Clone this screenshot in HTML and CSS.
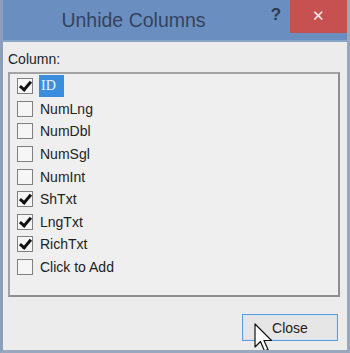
FILE: index.html
```html
<!DOCTYPE html>
<html lang="en">
<head>
    <meta charset="UTF-8">
    <title>Unhide Columns</title>
    <link rel="stylesheet" href="styles.css">
</head>
<body>
    <div class="window">
        <div class="titlebar">
            <div class="title">Unhide Columns</div>
            <div class="help">?</div>
            <div class="close-x">&#x2715;</div>
        </div>

        <div class="content">
            <div class="label">Column:</div>
            <div class="listbox">
                <div class="item"><span class="box checked"></span><span class="name selected">ID</span></div>
                <div class="item"><span class="box"></span><span class="name">NumLng</span></div>
                <div class="item"><span class="box"></span><span class="name">NumDbl</span></div>
                <div class="item"><span class="box"></span><span class="name">NumSgl</span></div>
                <div class="item"><span class="box"></span><span class="name">NumInt</span></div>
                <div class="item"><span class="box checked"></span><span class="name">ShTxt</span></div>
                <div class="item"><span class="box checked"></span><span class="name">LngTxt</span></div>
                <div class="item"><span class="box checked"></span><span class="name">RichTxt</span></div>
                <div class="item"><span class="box"></span><span class="name">Click to Add</span></div>
            </div>
            <div class="footer">
                <button class="btn">Close</button>
            </div>
        </div>

        <svg class="cursor" width="24" height="32" viewBox="0 0 24 32">
            <path d="M1 1 L1 24 L6.5 18.5 L10.5 28 L14 26.5 L10 17.5 L17.5 17.5 Z" fill="#fff" stroke="#111" stroke-width="1.2" stroke-linejoin="round"/>
        </svg>
    </div>
</body>
</html>
```

FILE: styles.css
```css
body {
    margin: 0;
    padding: 0;
    font-family: "Liberation Sans", Arial, sans-serif;
    background-color: #ececec;
}

.window {
    position: relative;
    width: 350px;
    height: 353px;
    box-sizing: border-box;
    border-left: 3px solid #8b9fbd;
    border-right: 3px solid #9aa8bd;
    border-bottom: 3px solid #9aa8bd;
    background-color: #ececec;
    display: flex;
    flex-direction: column;
    overflow: hidden;
}

.titlebar {
    height: 40px;
    background-color: #6a8ec0;
    border-bottom: 2px solid #8aa4c8;
    display: flex;
    align-items: flex-start;
    flex-shrink: 0;
}

.title {
    flex: 1;
    text-align: center;
    font-size: 19.5px;
    color: #33445c;
    line-height: 40px;
    padding-left: 2px;
}

.help {
    width: 28px;
    text-align: center;
    font-size: 17px;
    font-weight: bold;
    color: #2c3a50;
    line-height: 30px;
}

.close-x {
    width: 57px;
    height: 33px;
    background-color: #c75050;
    color: #fbe9e9;
    font-size: 15px;
    line-height: 31px;
    text-align: center;
}

.content {
    flex: 1;
    display: flex;
    flex-direction: column;
    padding: 0 7px 0 5px;
}

.label {
    font-size: 14px;
    color: #1e1e1e;
    margin-top: 9px;
    height: 21px;
}

.listbox {
    height: 220px;
    border: 2px solid #a3a3a3;
    border-right-color: #8f8f8f;
    border-bottom-color: #8f8f8f;
    background-color: #efefef;
    padding-top: 1px;
}

.item {
    display: flex;
    align-items: center;
    height: 22.6px;
}

.box {
    width: 14px;
    height: 14px;
    border: 1px solid #808080;
    background-color: #f6f6f6;
    margin-left: 7px;
    margin-right: 6px;
    position: relative;
}

.box.checked::after {
    content: "";
    position: absolute;
    left: 4px;
    top: 0px;
    width: 4px;
    height: 9px;
    border-right: 3px solid #111;
    border-bottom: 3px solid #111;
    transform: rotate(40deg);
}

.name {
    font-size: 14px;
    color: #222;
    padding: 0 1px;
    line-height: 20px;
}

.name.selected {
    background-color: #3b8ede;
    color: #e8f2ff;
    font-family: "Liberation Serif", serif;
    padding: 1px 8px 1px 2px;
}

.footer {
    display: flex;
    justify-content: flex-end;
    padding-top: 17px;
}

.btn {
    width: 96px;
    height: 27px;
    font-family: "Liberation Sans", Arial, sans-serif;
    font-size: 14px;
    color: #222;
    background-color: #e6e6e6;
    border: 1px solid #5f9ed8;
    box-shadow: inset 0 0 0 1px #cfe3f5;
    margin-right: 2px;
}

.cursor {
    position: absolute;
    left: 251px;
    top: 323px;
}
```
